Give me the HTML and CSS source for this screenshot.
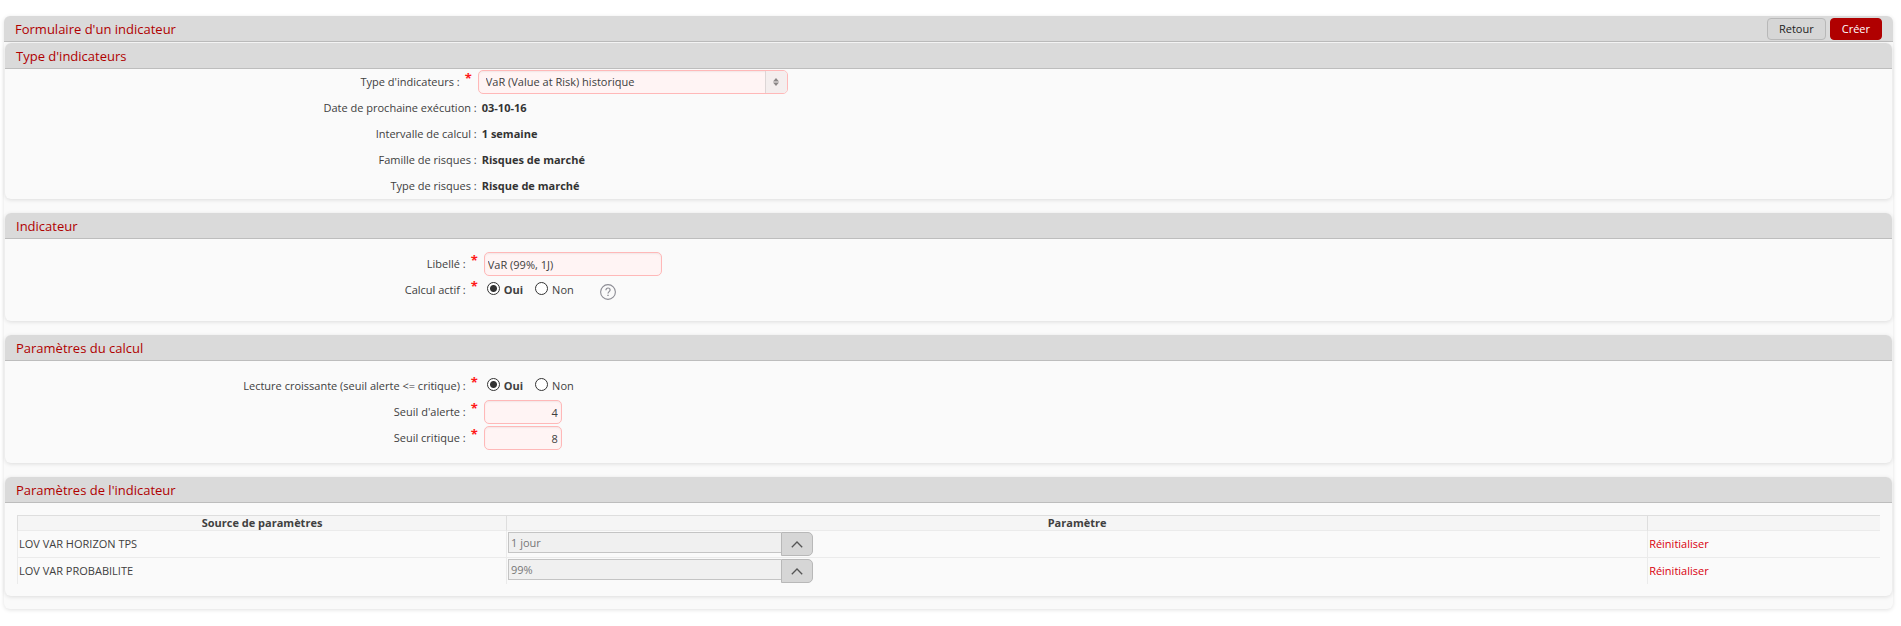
FILE: index.html
```html
<!DOCTYPE html>
<html lang="fr">
<head>
    <meta charset="UTF-8">
    <meta name="viewport" content="width=device-width, initial-scale=1.0">
    <title>Formulaire d'un indicateur</title>
    <link rel="stylesheet" href="styles.css">
</head>
<body>
    <form class="panel">
        <div class="bar">
            <h1 class="bar-title">Formulaire d'un indicateur</h1>
            <button type="button" class="btn">Retour</button>
            <button type="submit" class="btn btn-primary">Créer</button>
        </div>

        <section class="section">
            <h2 class="section-title">Type d'indicateurs</h2>
            <div class="rows">
                <div class="row row-wide">
                    <label class="label" for="type">Type d'indicateurs :<span class="star">*</span></label>
                    <div class="select">
                        <select id="type" required>
                            <option>VaR (Value at Risk) historique</option>
                        </select>
                        <span class="select-arrow">
                            <svg width="6" height="8" viewBox="0 0 6 8"><path d="M3 0L6 3.5H0zM3 8L6 4.5H0z" fill="#8a8686"/></svg>
                        </span>
                    </div>
                </div>
                <div class="row">
                    <span class="label">Date de prochaine exécution :</span>
                    <span class="value">03-10-16</span>
                </div>
                <div class="row">
                    <span class="label">Intervalle de calcul :</span>
                    <span class="value">1 semaine</span>
                </div>
                <div class="row">
                    <span class="label">Famille de risques :</span>
                    <span class="value">Risques de marché</span>
                </div>
                <div class="row">
                    <span class="label">Type de risques :</span>
                    <span class="value">Risque de marché</span>
                </div>
            </div>
        </section>

        <section class="section">
            <h2 class="section-title">Indicateur</h2>
            <div class="rows rows-padded rows-tall">
                <div class="row">
                    <label class="label" for="libelle">Libellé :<span class="star">*</span></label>
                    <input class="field" id="libelle" type="text" value="VaR (99%, 1J)" required>
                </div>
                <div class="row" role="radiogroup" aria-labelledby="actif">
                    <span class="label" id="actif">Calcul actif :<span class="star">*</span></span>
                    <div class="radios">
                        <label class="radio"><input type="radio" name="actif" checked><span>Oui</span></label>
                        <label class="radio"><input type="radio" name="actif"><span>Non</span></label>
                    </div>
                    <button type="button" class="help" aria-label="Aide">
                        <svg width="16" height="16" viewBox="0 0 16 16" fill="none" stroke="#8c8c94">
                            <circle cx="8" cy="8" r="7.4" stroke-width="1.1"/>
                            <path d="M5.9 6.2C5.9 4.8 6.8 4 8 4s2.1.8 2.1 2c0 1.6-2.1 1.7-2.1 3.5" stroke-width="1.2"/>
                            <path d="M8 10.7v1.4" stroke-width="1.4"/>
                        </svg>
                    </button>
                </div>
            </div>
        </section>

        <section class="section">
            <h2 class="section-title">Paramètres du calcul</h2>
            <div class="rows rows-padded">
                <div class="row" role="radiogroup" aria-labelledby="lecture">
                    <span class="label" id="lecture">Lecture croissante (seuil alerte &lt;= critique) :<span class="star">*</span></span>
                    <div class="radios">
                        <label class="radio"><input type="radio" name="lecture" checked><span>Oui</span></label>
                        <label class="radio"><input type="radio" name="lecture"><span>Non</span></label>
                    </div>
                </div>
                <div class="row">
                    <label class="label" for="alerte">Seuil d'alerte :<span class="star">*</span></label>
                    <input class="field field-number" id="alerte" type="text" value="4" required>
                </div>
                <div class="row">
                    <label class="label" for="critique">Seuil critique :<span class="star">*</span></label>
                    <input class="field field-number" id="critique" type="text" value="8" required>
                </div>
            </div>
        </section>

        <section class="section">
            <h2 class="section-title">Paramètres de l'indicateur</h2>
            <div class="rows rows-table">
                <table class="params">
                    <thead>
                        <tr>
                            <th class="col-source">Source de paramètres</th>
                            <th>Paramètre</th>
                            <th class="col-action"></th>
                        </tr>
                    </thead>
                    <tbody>
                        <tr>
                            <td><label for="horizon">LOV VAR HORIZON TPS</label></td>
                            <td>
                                <div class="lov">
                                    <input id="horizon" type="text" value="1 jour" readonly>
                                    <button type="button" aria-label="Choisir l'horizon">
                                        <svg width="12" height="7" viewBox="0 0 12 7"><path d="M.8 6.2L6 1l5.2 5.2" fill="none" stroke="#555" stroke-width="1.3"/></svg>
                                    </button>
                                </div>
                            </td>
                            <td><a class="reset" href="#">Réinitialiser</a></td>
                        </tr>
                        <tr>
                            <td><label for="proba">LOV VAR PROBABILITE</label></td>
                            <td>
                                <div class="lov">
                                    <input id="proba" type="text" value="99%" readonly>
                                    <button type="button" aria-label="Choisir la probabilité">
                                        <svg width="12" height="7" viewBox="0 0 12 7"><path d="M.8 6.2L6 1l5.2 5.2" fill="none" stroke="#555" stroke-width="1.3"/></svg>
                                    </button>
                                </div>
                            </td>
                            <td><a class="reset" href="#">Réinitialiser</a></td>
                        </tr>
                    </tbody>
                </table>
            </div>
        </section>
    </form>
</body>
</html>
```
FILE: styles.css
```css
* {
    box-sizing: border-box;
}
body {
    margin: 0;
    padding: 16px 8px 16px 4px;
    background: #fff;
    color: #404040;
    font-family: "Open Sans", "Noto Sans", sans-serif;
    font-size: 11px;
    line-height: 16px;
}
input, select, button {
    margin: 0;
    font: inherit;
    color: inherit;
}
.panel {
    padding: 0 1px 13px;
    background: #fafafa;
    border-radius: 6px;
    box-shadow: 0 1px 4px rgba(0, 0, 0, 0.12);
}

/* title bars */
.bar {
    display: flex;
    align-items: center;
    gap: 4px;
    height: 26px;
    margin: 0 -1px 1px;
    padding: 0 11px;
    background: #dadada;
    border-bottom: 1px solid #bdbdbd;
    border-radius: 6px 6px 0 0;
}
.bar-title, .section-title {
    margin: 0;
    color: #b00000;
    font-size: 13px;
    font-weight: 400;
}
.bar-title {
    flex: 1;
}
.section-title {
    height: 26px;
    padding: 0 11px;
    line-height: 26px;
    background: #dadada;
    border-bottom: 1px solid #bdbdbd;
    border-radius: 6px 6px 0 0;
}
.btn {
    height: 22px;
    padding: 0 11px;
    line-height: 20px;
    color: #222;
    background: #d6d6d6;
    border: 1px solid #b8b8b8;
    border-radius: 4px;
    cursor: pointer;
}
.btn-primary {
    color: #fff;
    background: #b00000;
    border-color: #b00000;
}

/* sections */
.section {
    margin-bottom: 14px;
    background: #fafafa;
    border-radius: 6px;
    box-shadow: 0 1px 4px rgba(0, 0, 0, 0.12);
}
.section:last-child {
    margin-bottom: 0;
}
.rows-padded {
    padding: 12px 0;
}
.rows-tall {
    padding-bottom: 18px;
}
.rows-table {
    padding: 12px;
}
.row {
    display: flex;
    align-items: center;
    height: 26px;
}
.label {
    display: flex;
    align-items: center;
    justify-content: flex-end;
    width: 25%;
}
.value {
    margin-left: 5px;
    font-weight: 700;
    color: #333;
}
.star {
    width: 11px;
    height: 24px;
    padding-left: 5px;
    color: #ff1a1a;
    font-size: 13px;
    font-weight: 700;
}
.row-wide .star {
    width: 17px;
}

/* fields */
.select {
    position: relative;
    width: 310px;
    margin-left: 1px;
}
.select select, .field {
    display: block;
    height: 24px;
    color: #404040;
    background: #fff4f4;
    border: 1px solid #ffb8b8;
    border-radius: 5px;
    box-shadow: inset 0 1px 2px rgba(0, 0, 0, 0.06);
    outline: none;
}
.select select {
    width: 100%;
    padding: 0 28px 0 7px;
    appearance: none;
}
.select-arrow {
    position: absolute;
    top: 1px;
    right: 1px;
    bottom: 1px;
    display: flex;
    align-items: center;
    justify-content: center;
    width: 22px;
    background: #f4eeee;
    border-left: 1px solid #ddd6d6;
    border-radius: 0 4px 4px 0;
    pointer-events: none;
}
.field {
    width: 178px;
    margin-left: 7px;
    padding: 0 3px;
}
.field-number {
    width: 78px;
    text-align: right;
}
.radios {
    display: flex;
    gap: 12px;
    margin-left: 10px;
}
.radio {
    display: flex;
    align-items: center;
    gap: 4px;
}
.radio input {
    width: 13px;
    height: 13px;
    margin-bottom: 4px;
    appearance: none;
    background: #fff;
    border: 1px solid #333;
    border-radius: 50%;
}
.radio input:checked {
    background: radial-gradient(circle, #333 3px, #fff 4px);
}
.radio input:checked + span {
    font-weight: 700;
}
.help {
    display: flex;
    margin: 4px 0 0 26px;
    padding: 0;
    background: none;
    border: 0;
    cursor: pointer;
}

/* parameters table */
.params {
    width: 100%;
    table-layout: fixed;
    border-collapse: separate;
    border-spacing: 0;
}
.params th {
    height: 16px;
    padding: 0;
    line-height: 14px;
    background: #f5f5f5;
    border-top: 1px solid #dedede;
    border-left: 1px solid #dedede;
    border-bottom: 1px solid #ebebeb;
}
.params td {
    height: 26px;
    padding: 0 1px;
    border-left: 1px solid #ebebeb;
}
.params tbody tr:first-child td {
    height: 27px;
    border-bottom: 1px solid #ebebeb;
}
.params .col-source {
    width: 26.25%;
}
.params .col-action {
    width: 12.5%;
}
.lov {
    display: flex;
    align-items: flex-start;
}
.lov input {
    width: 273px;
    height: 21px;
    padding: 0 2px;
    color: #777;
    background: #f0f0f0;
    border: 1px solid #c4c4c4;
    border-right: 0;
}
.lov button {
    display: flex;
    align-items: center;
    justify-content: center;
    width: 32px;
    height: 24px;
    padding: 0;
    background: #d6d6d6;
    border: 1px solid #b8b8b8;
    border-radius: 0 5px 5px 0;
    cursor: pointer;
}
.reset {
    color: #d9000d;
    text-decoration: none;
}
```
